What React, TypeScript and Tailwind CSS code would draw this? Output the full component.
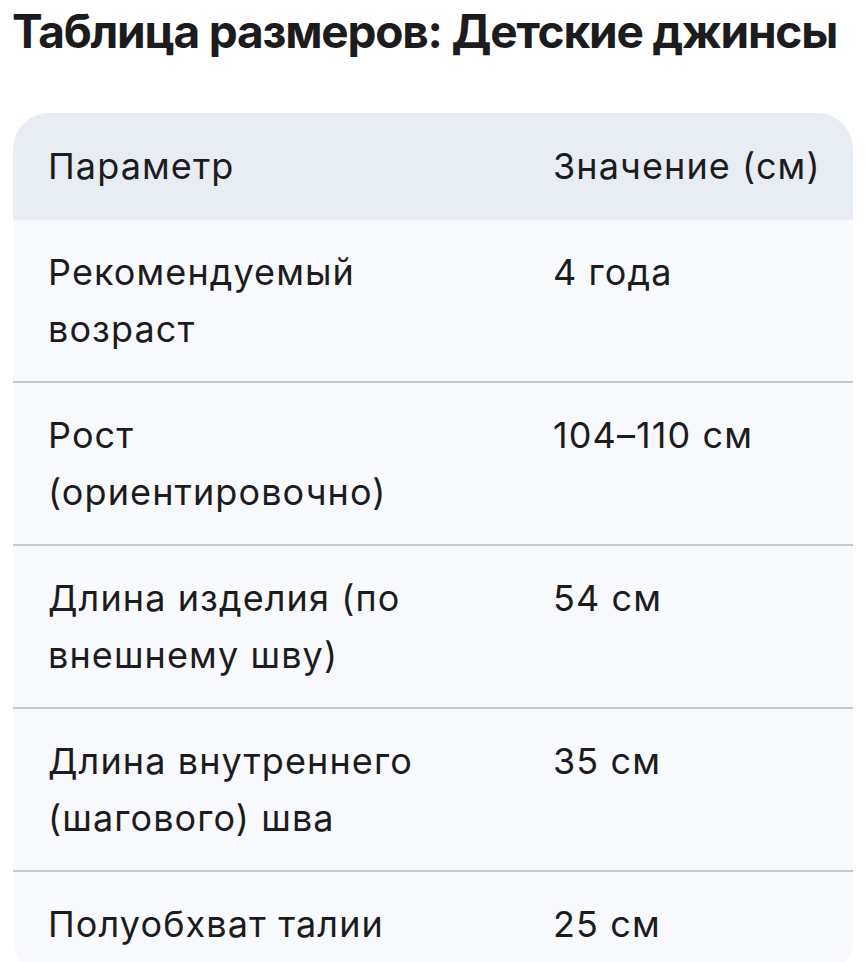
const rows: [string, string][] = [
  ["Рекомендуемый возраст", "4 года"],
  ["Рост (ориентировочно)", "104–110 см"],
  ["Длина изделия (по внешнему шву)", "54 см"],
  ["Длина внутреннего (шагового) шва", "35 см"],
  ["Полуобхват талии", "25 см"],
];

export default function App() {
  return (
    <div className="min-h-screen bg-white text-[#1c1c1e] font-['Inter','Noto_Sans',sans-serif]">
      <h1 className="pl-[12px] pt-[3px] text-[46px] leading-[56px] font-bold tracking-[-1.2px] whitespace-nowrap">
        Таблица размеров: Детские джинсы
      </h1>

      <div className="mx-[13px] mt-[54px] rounded-[36px] overflow-hidden bg-[#f8f9fc] text-[36px] leading-[57px] tracking-[1.1px]">
        {/* Header */}
        <div className="grid grid-cols-[540px_1fr] bg-[#e8edf4]">
          <div className="pl-[35px] py-[25px]">Параметр</div>
          <div className="py-[25px]">Значение (см)</div>
        </div>

        {/* Rows */}
        {rows.map(([k, v], i) => (
          <div
            key={k}
            className={`grid grid-cols-[540px_1fr] ${i > 0 ? "border-t-2 border-[#c8c9cd]" : ""}`}
          >
            <div className="pl-[35px] pr-[105px] pt-[24px] pb-[23px]">{k}</div>
            <div className="pt-[24px] pb-[23px]">{v}</div>
          </div>
        ))}
      </div>
    </div>
  );
}
